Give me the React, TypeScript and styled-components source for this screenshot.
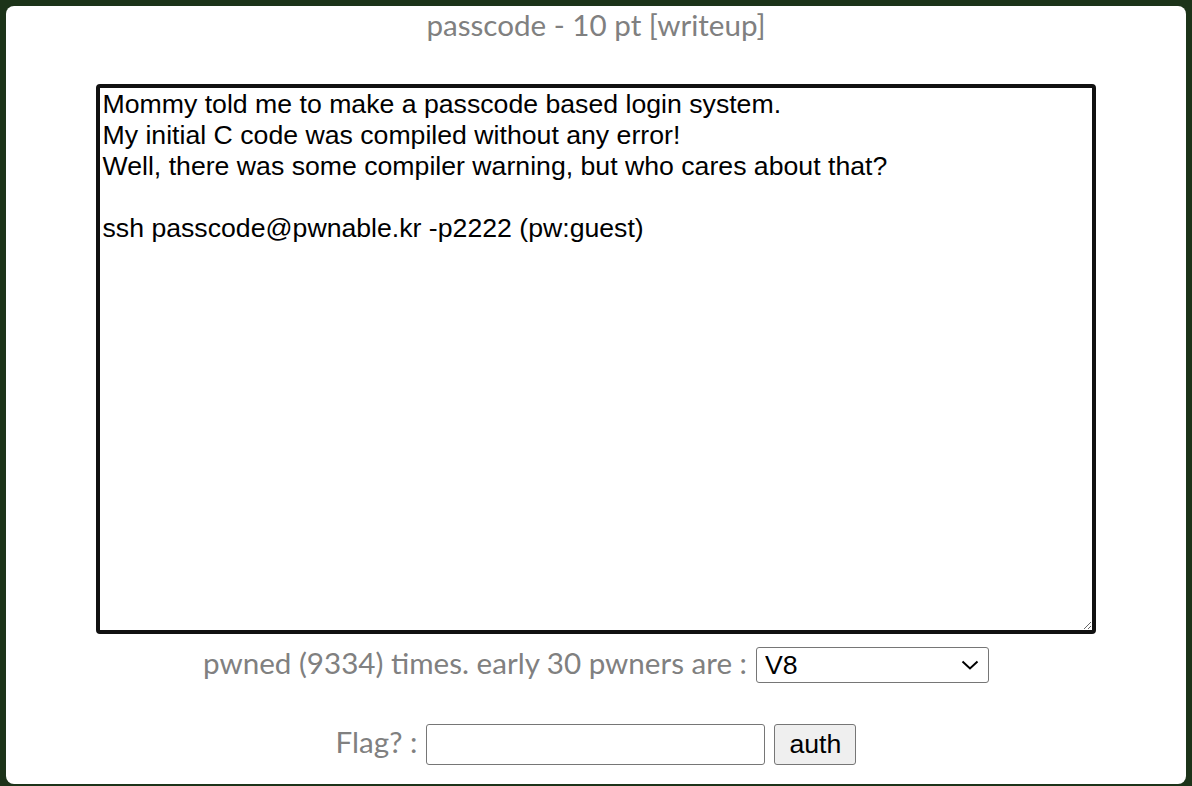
import React from "react";
import styled, { createGlobalStyle } from "styled-components";

const Global = createGlobalStyle`
  html, body { margin: 0; padding: 0; }
  body {
    background: #1c3319;
    height: 786px;
    overflow: hidden;
  }
`;

const Card = styled.div`
  margin: 6px;
  height: 778px;
  box-sizing: border-box;
  background: #ffffff;
  border-radius: 8px;
  display: flex;
  flex-direction: column;
  align-items: center;
  padding-top: 1px;
`;

const Title = styled.div`
  font-family: Lato, "Open Sans", sans-serif;
  font-size: 29.6px;
  line-height: 36px;
  color: #808080;
  text-align: center;
`;

const Description = styled.textarea`
  margin-top: 41px;
  width: 1000px;
  height: 550px;
  box-sizing: border-box;
  border: 4px solid #111111;
  border-radius: 4px;
  padding: 1.3px 2px 2px 2.5px;
  font-family: "Liberation Sans", Arial, sans-serif;
  font-size: 26.67px;
  line-height: 31px;
  color: #000000;
  background: #ffffff;
  outline: none;
`;

const Row = styled.div<{ $top: number }>`
  margin-top: ${(p) => p.$top}px;
  display: flex;
  align-items: baseline;
  gap: 9px;
`;

const Label = styled.span`
  font-family: Lato, "Open Sans", sans-serif;
  font-size: 29.6px;
  color: #808080;
`;

const SelectWrap = styled.div`
  position: relative;
  display: inline-flex;
`;

const Select = styled.select`
  appearance: none;
  width: 233px;
  height: 36px;
  box-sizing: border-box;
  border: 1px solid #767676;
  border-radius: 3px;
  background: #ffffff;
  padding: 0 8px;
  font-family: "Liberation Sans", Arial, sans-serif;
  font-size: 26.67px;
  color: #000000;
  outline: none;
`;

const Chevron = styled.svg`
  position: absolute;
  right: 10px;
  top: 13px;
  width: 18px;
  height: 10px;
  pointer-events: none;
`;

const FlagInput = styled.input`
  width: 339px;
  height: 41px;
  box-sizing: border-box;
  border: 1px solid #767676;
  border-radius: 3px;
  padding: 0 4px;
  font-family: "Liberation Sans", Arial, sans-serif;
  font-size: 26.67px;
  outline: none;
`;

const AuthButton = styled.button`
  width: 82px;
  height: 41px;
  box-sizing: border-box;
  border: 1px solid #767676;
  border-radius: 3px;
  background: #efefef;
  padding: 0;
  font-family: "Liberation Sans", Arial, sans-serif;
  font-size: 26.67px;
  color: #000000;
`;

const text = `Mommy told me to make a passcode based login system.
My initial C code was compiled without any error!
Well, there was some compiler warning, but who cares about that?

ssh passcode@pwnable.kr -p2222 (pw:guest)`;

export default function App() {
  return (
    <>
      <Global />
      <Card>
        <Title>passcode - 10 pt [writeup]</Title>
        <Description readOnly value={text} />
        <Row $top={11}>
          <Label>pwned (9334) times. early 30 pwners are :</Label>
          <SelectWrap>
            <Select defaultValue="V8">
              <option>V8</option>
            </Select>
            <Chevron viewBox="0 0 18 10">
              <path d="M1.5 1.5 L9 8.5 L16.5 1.5" fill="none" stroke="#000" strokeWidth="2" />
            </Chevron>
          </SelectWrap>
        </Row>
        <Row $top={41}>
          <Label>Flag? :</Label>
          <FlagInput type="text" />
          <AuthButton>auth</AuthButton>
        </Row>
      </Card>
    </>
  );
}
